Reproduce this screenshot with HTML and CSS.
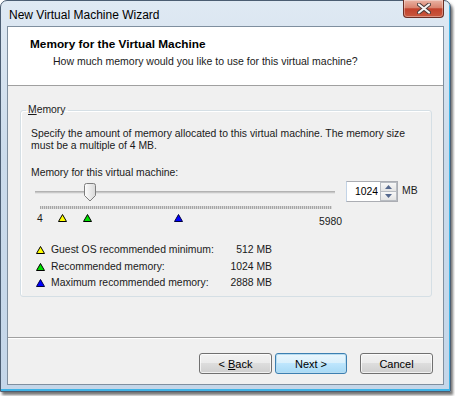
FILE: index.html
```html
<!DOCTYPE html>
<html lang="en">
<head>
    <meta charset="UTF-8">
    <title>New Virtual Machine Wizard</title>
    <link rel="stylesheet" href="styles.css">
</head>
<body>

    <div class="window">
        <div class="titlebar">
            <span class="title">New Virtual Machine Wizard</span>
            <button class="close" type="button" aria-label="Close">
                <svg width="14" height="11" viewBox="0 0 14 11">
                    <path d="M2 1.5 L12 9.5 M12 1.5 L2 9.5" stroke="#4a3a38" stroke-width="4" stroke-linecap="round"/>
                    <path d="M2 1.5 L12 9.5 M12 1.5 L2 9.5" stroke="#f4f4f4" stroke-width="2.2" stroke-linecap="round"/>
                </svg>
            </button>
        </div>

        <div class="client">
            <!-- Wizard header -->
            <div class="header">
                <div class="header-title">Memory for the Virtual Machine</div>
                <div class="header-sub">How much memory would you like to use for this virtual machine?</div>
            </div>

            <div class="page">
                <fieldset class="group">
                    <legend><u>M</u>emory</legend>

                    <p class="desc">Specify the amount of memory allocated to this virtual machine. The memory size must be a multiple of 4 MB.</p>

                    <div class="field-label">Memory for this virtual machine:</div>

                    <div class="slider-row">
                        <div class="slider">
                            <div class="track"></div>
                            <svg class="thumb" width="12" height="19" viewBox="0 0 12 19">
                                <defs>
                                    <linearGradient id="thumbFill" x1="0" y1="0" x2="1" y2="0">
                                        <stop offset="0" stop-color="#fdfdfd"/>
                                        <stop offset="1" stop-color="#d8d8d8"/>
                                    </linearGradient>
                                </defs>
                                <path d="M2.5 0.5 H9.5 A2 2 0 0 1 11.5 2.5 V12.5 L6 18 L0.5 12.5 V2.5 A2 2 0 0 1 2.5 0.5 Z" fill="url(#thumbFill)" stroke="#7d7d7d"/>
                            </svg>
                            <div class="ticks"></div>
                            <div class="scale">
                                <span class="scale-min">4</span>
                                <span class="scale-max">5980</span>
                                <svg class="marker" style="left: 23px" width="9" height="8" viewBox="0 0 9 8"><polygon points="4.5,0.5 8.5,7.5 0.5,7.5" fill="#ffff00" stroke="#000"/></svg>
                                <svg class="marker" style="left: 48px" width="9" height="8" viewBox="0 0 9 8"><polygon points="4.5,0.5 8.5,7.5 0.5,7.5" fill="#00e000" stroke="#000"/></svg>
                                <svg class="marker" style="left: 139px" width="9" height="8" viewBox="0 0 9 8"><polygon points="4.5,0.5 8.5,7.5 0.5,7.5" fill="#0000ff" stroke="#000040"/></svg>
                            </div>
                        </div>

                        <div class="spin">
                            <input class="spin-input" type="text" value="1024">
                            <div class="spin-buttons">
                                <span class="spin-btn"><svg width="7" height="4" viewBox="0 0 7 4"><polygon points="3.5,0 7,4 0,4" fill="#56698e"/></svg></span>
                                <span class="spin-btn"><svg width="7" height="4" viewBox="0 0 7 4"><polygon points="0,0 7,0 3.5,4" fill="#56698e"/></svg></span>
                            </div>
                        </div>
                        <span class="unit">MB</span>
                    </div>

                    <ul class="legend">
                        <li>
                            <svg width="9" height="8" viewBox="0 0 9 8"><polygon points="4.5,0.5 8.5,7.5 0.5,7.5" fill="#ffff00" stroke="#000"/></svg>
                            <span>Guest OS recommended minimum:</span>
                            <span class="value">512 MB</span>
                        </li>
                        <li>
                            <svg width="9" height="8" viewBox="0 0 9 8"><polygon points="4.5,0.5 8.5,7.5 0.5,7.5" fill="#00e000" stroke="#000"/></svg>
                            <span>Recommended memory:</span>
                            <span class="value">1024 MB</span>
                        </li>
                        <li>
                            <svg width="9" height="8" viewBox="0 0 9 8"><polygon points="4.5,0.5 8.5,7.5 0.5,7.5" fill="#0000ff" stroke="#000040"/></svg>
                            <span>Maximum recommended memory:</span>
                            <span class="value">2888 MB</span>
                        </li>
                    </ul>
                </fieldset>
            </div>

            <!-- Wizard buttons -->
            <div class="footer">
                <button class="btn" type="button">&lt; <u>B</u>ack</button>
                <button class="btn btn-default" type="button">Next &gt;</button>
                <button class="btn btn-cancel" type="button">Cancel</button>
            </div>
        </div>
    </div>

</body>
</html>
```

FILE: styles.css
```css
/* Global */
body {
    margin: 0;
    width: 455px;
    height: 396px;
    overflow: hidden;
    background: #ffffff;
    font-family: 'Liberation Sans', Arial, sans-serif;
    font-size: 10.4px;
    color: #1a1a1a;
}

/* Aero window frame */
.window {
    width: 451px;
    height: 392px;
    box-sizing: border-box;
    border: 1px solid #4b5d72;
    border-radius: 7px 7px 0 0;
    padding: 0 6px 6px 6px;
    background: linear-gradient(180deg, #dfe9f3 0%, #cbdbeb 40%, #c4d6e9 100%);
    box-shadow: inset -1px -2px 0 #3fb3e6, 2px 3px 3px rgba(0, 0, 0, 0.55);
    display: flex;
    flex-direction: column;
}

.titlebar {
    height: 25px;
    display: flex;
    justify-content: space-between;
    align-items: flex-start;
}

.title {
    font-size: 12px;
    color: #000;
    margin: 7px 0 0 2px;
}

.close {
    width: 41px;
    height: 18px;
    margin: -1px 0 0 0;
    padding: 0;
    border: 1px solid #6b2d24;
    border-top: none;
    border-radius: 0 0 4px 4px;
    background: linear-gradient(180deg, #eab3a4 0%, #d98470 45%, #c2412c 52%, #c9583e 100%);
    box-shadow: inset 0 0 0 1px rgba(255, 255, 255, 0.35);
    display: flex;
    justify-content: center;
    align-items: center;
}

/* Client area */
.client {
    flex: 1;
    background: #f0f0f0;
    border: 1px solid #7f8f9f;
    display: flex;
    flex-direction: column;
}

.header {
    height: 59px;
    box-sizing: border-box;
    background: #ffffff;
    border-bottom: 1px solid #a0a0a0;
    padding: 10px 0 0 22px;
}

.header-title {
    font-weight: bold;
    font-size: 11.8px;
    line-height: 14px;
    color: #000;
}

.header-sub {
    font-size: 10.5px;
    line-height: 14px;
    margin: 3px 0 0 23px;
}

.page {
    flex: 1;
    padding: 17px 11px 0 12px;
    border-bottom: 1px solid #a0a0a0;
}

/* Group box */
.group {
    margin: 0;
    height: 194px;
    box-sizing: border-box;
    border: 1px solid #d5dfe5;
    border-radius: 3px;
    box-shadow: inset 1px 1px 0 #ffffff;
    padding: 0 10px 0 10px;
}

.group legend {
    padding: 0 2px;
    margin-left: -5px;
    line-height: 14px;
}

.desc {
    margin: 11px 0 0 0;
    line-height: 12px;
}

.field-label {
    margin-top: 15px;
    line-height: 12px;
}

.slider-row {
    display: flex;
    align-items: flex-start;
    margin-top: 2px;
}

/* Slider */
.slider {
    position: relative;
    width: 300px;
    height: 44px;
    margin-left: 4px;
}

.track {
    margin-top: 10px;
    height: 1px;
    border-top: 1px solid #b2b2b2;
    border-bottom: 1px solid #e4e4e4;
    background: #c8c8c8;
}

.thumb {
    position: absolute;
    left: 49px;
    top: 2px;
}

.ticks {
    margin: 12px 0 0 5px;
    width: 292px;
    height: 3px;
    background: repeating-linear-gradient(90deg, #a6a6a6 0 1px, #d8d8d8 1px 2px);
}

.scale {
    position: relative;
    height: 14px;
    margin-top: 3px;
}

.scale-min {
    position: absolute;
    left: 2px;
    top: 1px;
}

.scale-max {
    position: absolute;
    left: 284px;
    top: 4px;
}

.marker {
    position: absolute;
    top: 2px;
}

/* Spin box */
.spin {
    display: flex;
    margin-left: 11px;
    height: 21px;
    box-sizing: border-box;
    border: 1px solid #abadb3;
    border-left-color: #c3d4e7;
    background: #ffffff;
}

.spin-input {
    width: 31px;
    border: none;
    padding: 0 2px 0 0;
    text-align: right;
    font: inherit;
    color: #000;
    outline: none;
    background: transparent;
}

.spin-buttons {
    width: 17px;
    display: flex;
    flex-direction: column;
}

.spin-btn {
    flex: 1;
    display: flex;
    justify-content: center;
    align-items: center;
    border: 1px solid #b8bcc2;
    background: linear-gradient(180deg, #f7f7f7, #e4e4e4);
}

.spin-btn + .spin-btn {
    border-top: none;
}

.unit {
    margin: 4px 0 0 4px;
}

/* Legend list */
.legend {
    list-style: none;
    margin: 17px 0 0 5px;
    padding: 0;
    width: 236px;
}

.legend li {
    display: grid;
    grid-template-columns: 9px 1fr auto;
    column-gap: 6px;
    align-items: center;
    height: 16.5px;
    line-height: 12px;
}

.legend .value {
    text-align: right;
}

/* Footer buttons */
.footer {
    height: 46px;
    box-sizing: border-box;
    border-top: 1px solid #ffffff;
    padding: 14px 10px 0 0;
    display: flex;
    justify-content: flex-end;
    align-items: flex-start;
}

.btn {
    width: 73px;
    height: 21px;
    padding: 0;
    font: inherit;
    font-size: 11px;
    color: #000;
    border: 1px solid #707070;
    border-radius: 3px;
    background: linear-gradient(180deg, #f2f2f2 0%, #ebebeb 48%, #dddddd 50%, #cfcfcf 100%);
    box-shadow: inset 0 0 0 1px rgba(255, 255, 255, 0.7);
}

.btn + .btn {
    margin-left: 3px;
}

.btn-default {
    width: 72px;
    border-color: #3c7fb1;
    background: linear-gradient(180deg, #eaf6fd 0%, #d9f0fc 48%, #bee6fd 50%, #a7d9f5 100%);
    box-shadow: inset 0 0 0 1px #b8dcf0;
}

.btn.btn-cancel {
    margin-left: 13px;
}
```
